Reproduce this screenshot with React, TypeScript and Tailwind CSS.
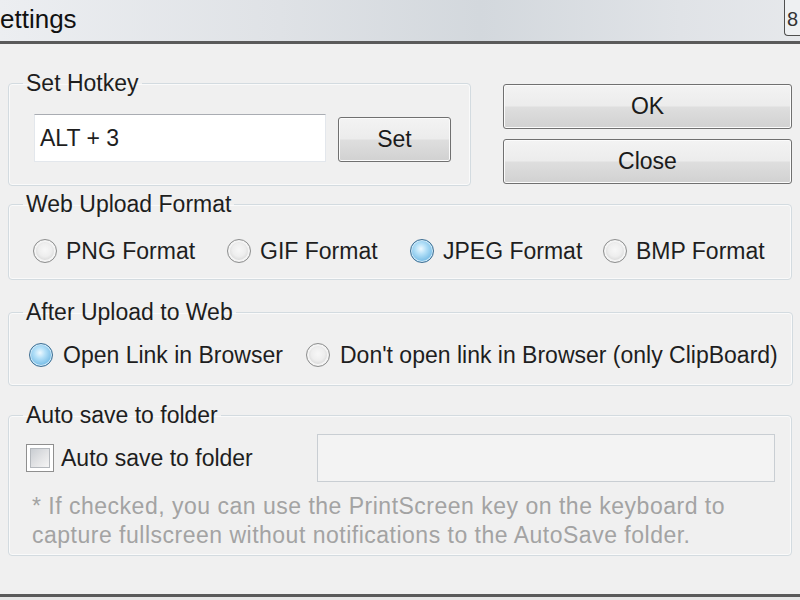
import React from "react";

const Radio = ({ checked }: { checked?: boolean }) =>
  checked ? (
    <span className="block w-[24px] h-[24px] shrink-0 rounded-full border border-[#3f6f93] bg-[radial-gradient(circle_at_45%_40%,#eef9ff_0%,#b4e0f8_30%,#78bde6_70%,#5a9fcf_100%)] shadow-[inset_0_0_0_1px_#cfe9f8]" />
  ) : (
    <span className="block w-[24px] h-[24px] shrink-0 rounded-full border border-[#8e8f8f] bg-[radial-gradient(circle_at_50%_45%,#f7f7f7_0%,#eeeeee_40%,#d2d2d2_75%,#bdbdbd_100%)] shadow-[inset_0_0_0_2px_#f4f4f4]" />
  );

const Checkbox = () => (
  <span className="flex w-[28px] h-[28px] shrink-0 border border-[#8f8f8f] bg-white p-[3px]">
    <span className="block flex-1 border border-[#b4b8bd] bg-[linear-gradient(135deg,#c9cdd2_0%,#e3e4e6_55%,#f5f5f5_100%)]" />
  </span>
);

const btn =
  "flex items-center justify-center rounded-[3px] border border-[#707070] bg-[linear-gradient(#f3f3f3_0%,#ececec_48%,#dedede_52%,#d1d1d1_100%)] shadow-[inset_0_0_0_1px_#fbfbfb] text-[#1b1b1b]";

const fs = "border border-[#d3dbe0] rounded-[4px] px-[14px] shadow-[inset_0_0_0_1px_#fafafa]";
const lg = "px-[3px] leading-[26px]";

export default function App() {
  return (
    <div className="w-[800px] h-[600px] overflow-hidden flex flex-col bg-[#f0f0f0] text-[23px] text-[#1e1e1e] font-['Liberation_Sans',Arial,sans-serif]">
      {/* title bar */}
      <div className="h-[44px] shrink-0 flex items-start justify-between border-b-[3px] border-[#5a5a5a] bg-[linear-gradient(to_right,#eceef1_0%,#dfe2e6_35%,#d3d8dd_60%,#e0e3e7_85%,#e6e8eb_100%)] overflow-hidden">
        <div className="mt-[5px] text-[26px] leading-[28px] text-[#111]">ettings</div>
        <div className="w-[16px] h-[36px] shrink-0 overflow-hidden rounded-bl-[4px] border-l border-b border-[#4f4f4f] bg-[#eef0f2] pl-[2px] pt-[9px] text-[20px] leading-[20px] text-[#333]">
          8
        </div>
      </div>

      {/* content */}
      <div className="flex-1 flex flex-col pl-[8px] pr-[8px] pt-[26px]">
        <div className="flex">
          <fieldset className={`${fs} w-[463px] pb-[23px]`}>
            <legend className={lg}>Set Hotkey</legend>
            <div className="flex items-end pl-[11px] pt-[18px]">
              <div className="w-[292px] h-[48px] bg-white border border-[#e3e7ec] border-t-[#a9acb2] flex items-center pl-[5px]">
                ALT + 3
              </div>
              <button className={`${btn} ml-[12px] w-[113px] h-[45px]`}>Set</button>
            </div>
          </fieldset>
          <div className="ml-auto mt-[14px] w-[289px] flex flex-col gap-[10px]">
            <button className={`${btn} h-[45px]`}>OK</button>
            <button className={`${btn} h-[45px]`}>Close</button>
          </div>
        </div>

        <fieldset className={`${fs} mt-[5px] pb-[15px]`}>
          <legend className={lg}>Web Upload Format</legend>
          <div className="flex items-center pl-[10px] pt-[21px] leading-[26px]">
            <div className="w-[194px] flex items-center gap-[9px]">
              <Radio />
              <span>PNG Format</span>
            </div>
            <div className="w-[183px] flex items-center gap-[9px]">
              <Radio />
              <span>GIF Format</span>
            </div>
            <div className="w-[193px] flex items-center gap-[9px]">
              <Radio checked />
              <span>JPEG Format</span>
            </div>
            <div className="flex items-center gap-[9px]">
              <Radio />
              <span>BMP Format</span>
            </div>
          </div>
        </fieldset>

        <fieldset className={`${fs} mt-[19px] pb-[17px]`}>
          <legend className={lg}>After Upload to Web</legend>
          <div className="flex items-center pl-[6px] pt-[17px] leading-[26px]">
            <div className="w-[277px] flex items-center gap-[10px]">
              <Radio checked />
              <span>Open Link in Browser</span>
            </div>
            <div className="flex items-center gap-[10px] whitespace-nowrap">
              <Radio />
              <span>Don't open link in Browser (only ClipBoard)</span>
            </div>
          </div>
        </fieldset>

        <fieldset className={`${fs} mt-[16px] pb-[5px]`}>
          <legend className={lg}>Auto save to folder</legend>
          <div className="flex items-center pl-[3px] pt-[6px]">
            <div className="w-[291px] flex items-center gap-[7px]">
              <Checkbox />
              <span>Auto save to folder</span>
            </div>
            <div className="w-[458px] h-[48px] border border-[#c9ced3] bg-[#f3f3f3]" />
          </div>
          <div className="mt-[10px] pl-[9px] text-[23px] tracking-[0.5px] leading-[29px] text-[#a3a3a3] whitespace-nowrap">
            * If checked, you can use the PrintScreen key on the keyboard to
            <br />
            capture fullscreen without notifications to the AutoSave folder.
          </div>
        </fieldset>
      </div>

      {/* bottom edge */}
      <div className="h-[3px] shrink-0 bg-[#5a5a5a]" />
      <div className="h-[3px] shrink-0 bg-[#e6e6e6]" />
    </div>
  );
}
